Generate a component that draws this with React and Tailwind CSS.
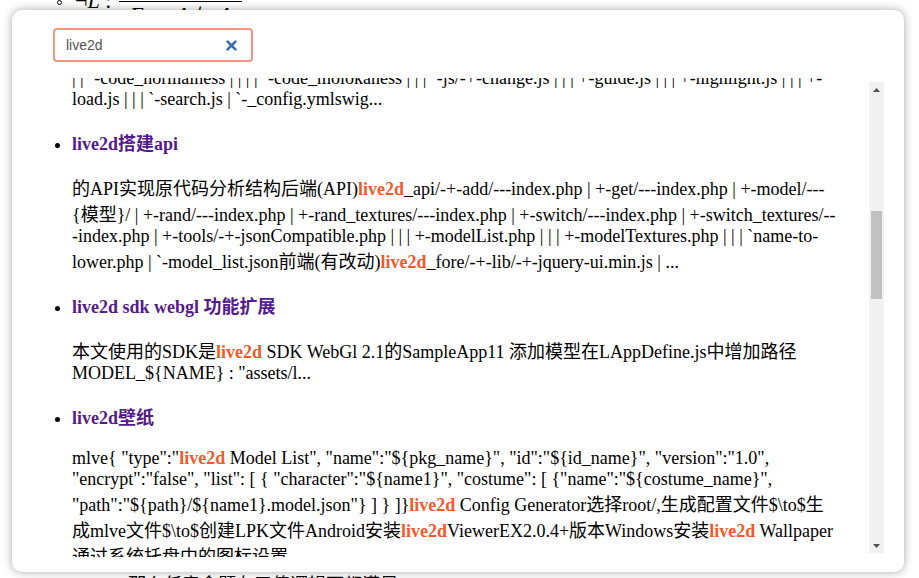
import React from "react";

const HL = ({ children }) => (
  <span className="font-bold text-[#f4592a]">{children}</span>
);

const Title = ({ children }) => (
  <a href="#" className="font-bold text-[#551a8b]">
    {children}
  </a>
);

function ScrollBar() {
  return (
    <div className="my-[4px] flex w-[15px] flex-col bg-[#f1f1f1]">
      <div className="flex h-[15px] items-center justify-center">
        <svg width="7" height="4" viewBox="0 0 7 4">
          <path d="M0 4 L3.5 0 L7 4 Z" fill="#505050" />
        </svg>
      </div>
      <div className="flex-1 px-[2px] pt-[114px]">
        <div className="h-[88px] bg-[#c1c1c1]" />
      </div>
      <div className="flex h-[15px] items-center justify-center">
        <svg width="7" height="4" viewBox="0 0 7 4">
          <path d="M0 0 L3.5 4 L7 0 Z" fill="#505050" />
        </svg>
      </div>
    </div>
  );
}

function SearchBox() {
  return (
    <div className="flex h-[34px] w-[200px] items-center rounded-[4px] border-2 border-[#f2967f] bg-white pl-[11px] pr-[14px]">
      <input
        readOnly
        value="live2d"
        className="min-w-0 flex-1 bg-transparent font-['Liberation_Sans',Arial,sans-serif] text-[14px] text-[#555] outline-none"
      />
      <svg width="11" height="11" viewBox="0 0 11 11">
        <path
          d="M1.6 1.6 L9.4 9.4 M9.4 1.6 L1.6 9.4"
          stroke="#3a6cab"
          strokeWidth="2.6"
          strokeLinecap="round"
        />
      </svg>
    </div>
  );
}

export default function App() {
  return (
    <div className="relative h-[578px] w-[919px] overflow-hidden bg-white font-['Liberation_Serif','Noto_Sans_CJK_SC',serif] text-[18px] leading-[normal] text-black">
      {/* page behind the dialog */}
      <div className="flex h-[578px] flex-col justify-between overflow-hidden">
        <div className="-mt-[30px] flex h-[50px] items-start">
          <span className="ml-[57px] mt-[30px] h-[5px] w-[5px] rounded-full border border-black" />
          <span className="ml-[13px] mt-[20px] text-[22px] leading-none">
            ¬<span className="italic">L</span> :
          </span>
          <span className="ml-[8px] mt-[7px] flex flex-col items-center text-[22px] leading-none">
            <span className="mb-[2px] italic">A B</span>
            <span className="h-px w-[123px] bg-black" />
            <span className="mt-[2px] italic">F → A ⊢ A</span>
          </span>
        </div>
        <div className="-mb-[18px] pl-[128px]">那么任意命题在三值逻辑下都满足</div>
      </div>

      {/* search dialog */}
      <div className="absolute left-[12px] top-[10px] flex h-[562px] w-[892px] flex-col rounded-[10px] bg-white shadow-[0_0_10px_rgba(0,0,0,0.35)]">
        <div className="pl-[41px] pt-[18px]">
          <SearchBox />
        </div>
        <div className="mt-[16px] flex h-[479px] px-[20px]">
          <div className="h-full min-w-0 flex-1 overflow-hidden">
            <div className="pl-[40px] pr-[32px]">
              <div className="-mt-[10px] mb-[19px] whitespace-nowrap">
                {"| | `-code_normalness | | | | `-code_molokaness | | | `-js/-+-change.js | | | +-guide.js | | | +-highlight.js | | | +-"}
                <br />
                {"load.js | | | `-search.js | `-_config.ymlswig..."}
              </div>
              <ul className="list-disc">
                <li>
                  <Title>live2d搭建api</Title>
                  <p className="my-[19px]">
                    {"的API实现原代码分析结构后端(API)"}
                    <HL>live2d</HL>
                    {"_api/-+-add/---index.php | +-get/---index.php | +-model/---{模型}/ | +-rand/---index.php | +-rand_textures/---index.php | +-switch/---index.php | +-switch_textures/---index.php | +-tools/-+-jsonCompatible.php | | | +-modelList.php | | | +-modelTextures.php | | | `name-to-lower.php | `-model_list.json前端(有改动)"}
                    <HL>live2d</HL>
                    {"_fore/-+-lib/-+-jquery-ui.min.js | ..."}
                  </p>
                </li>
                <li>
                  <Title>live2d sdk webgl 功能扩展</Title>
                  <p className="my-[19px]">
                    {"本文使用的SDK是"}
                    <HL>live2d</HL>
                    {" SDK WebGl 2.1的SampleApp11 添加模型在LAppDefine.js中增加路径MODEL_${NAME} : \"assets/l..."}
                  </p>
                </li>
                <li>
                  <Title>live2d壁纸</Title>
                  <p className="my-[19px]">
                    {'mlve{ "type":"'}
                    <HL>live2d</HL>
                    {' Model List", "name":"${pkg_name}", "id":"${id_name}", "version":"1.0", "encrypt":"false", "list": [ { "character":"${name1}", "costume": [ {"name":"${costume_name}", "path":"${path}/${name1}.model.json"} ] } ]}'}
                    <HL>live2d</HL>
                    {" Config Generator选择root/,生成配置文件$\\to$生成mlve文件$\\to$创建LPK文件Android安装"}
                    <HL>live2d</HL>
                    {"ViewerEX2.0.4+版本Windows安装"}
                    <HL>live2d</HL>
                    {" Wallpaper 通过系统托盘中的图标设置..."}
                  </p>
                </li>
              </ul>
            </div>
          </div>
          <ScrollBar />
        </div>
      </div>
    </div>
  );
}
